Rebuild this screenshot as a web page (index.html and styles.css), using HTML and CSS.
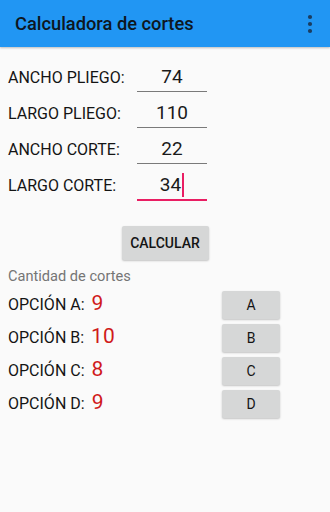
FILE: index.html
```html
<!DOCTYPE html>
<html lang="es">
<head>
<meta charset="utf-8">
<title>Calculadora de cortes</title>
<link rel="stylesheet" href="styles.css">
</head>
<body>
<header class="toolbar">
  <h1 class="title">Calculadora de cortes</h1>
  <svg class="menu" width="6" height="20" viewBox="0 0 6 20" aria-hidden="true">
    <circle cx="3" cy="3" r="2.1"/>
    <circle cx="3" cy="10" r="2.1"/>
    <circle cx="3" cy="17" r="2.1"/>
  </svg>
</header>
<main class="content">
  <div class="fields">
    <div class="field"><span class="label">ANCHO PLIEGO:</span><span class="input">74</span></div>
    <div class="field"><span class="label">LARGO PLIEGO:</span><span class="input">110</span></div>
    <div class="field"><span class="label">ANCHO CORTE:</span><span class="input">22</span></div>
    <div class="field"><span class="label">LARGO CORTE:</span><span class="input focused">34<span class="caret"></span></span></div>
  </div>
  <div class="calc-wrap"><button class="btn calc">CALCULAR</button></div>
  <p class="section">Cantidad de cortes</p>
  <div class="options">
    <div class="option"><div class="opt-left"><span class="opt-label">OPCIÓN A:</span><span class="opt-value">9</span></div><button class="btn opt-btn">A</button></div>
    <div class="option"><div class="opt-left"><span class="opt-label">OPCIÓN B:</span><span class="opt-value">10</span></div><button class="btn opt-btn">B</button></div>
    <div class="option"><div class="opt-left"><span class="opt-label">OPCIÓN C:</span><span class="opt-value">8</span></div><button class="btn opt-btn">C</button></div>
    <div class="option"><div class="opt-left"><span class="opt-label">OPCIÓN D:</span><span class="opt-value">9</span></div><button class="btn opt-btn">D</button></div>
  </div>
</main>
</body>
</html>
```
FILE: styles.css
```css
* { box-sizing: border-box; }
html, body { margin: 0; padding: 0; }
body {
  width: 330px;
  height: 512px;
  background: #fafafa;
  font-family: Roboto, "Noto Sans", "Liberation Sans", sans-serif;
  color: #141414;
  overflow: hidden;
}
.toolbar {
  height: 47px;
  background: #2196f3;
  display: flex;
  align-items: center;
  justify-content: space-between;
  padding: 0 17px 0 15px;
  box-shadow: 0 1px 2px rgba(0,0,0,0.25);
}
.title {
  margin: 0;
  font-size: 18.3px;
  font-weight: 500;
  color: #0e1620;
  letter-spacing: 0;
}
.menu { fill: #1b3d60; margin-top: 1px; }
.content { padding: 9px 0 0 8px; }
.fields { display: flex; flex-direction: column; }
.field {
  display: flex;
  height: 36px;
  padding-top: 8px;
  align-items: stretch;
}
.label {
  width: 129px;
  font-size: 16px;
  line-height: 28px;
  color: #141414;
}
.input {
  width: 70px;
  height: 28px;
  border-bottom: 1px solid #7a7a7a;
  text-align: center;
  font-size: 19px;
  line-height: 26px;
  color: #1a1a1a;
}
.input.focused { border-bottom: 2px solid #e91e63; height: 29px; }
.caret {
  display: inline-block;
  width: 2px;
  height: 24px;
  background: #e91e63;
  vertical-align: -6px;
  margin-left: 1px;
}
.calc-wrap { display: flex; justify-content: center; padding-right: 8px; margin-top: 26px; }
.btn {
  font-family: Roboto, "Noto Sans", "Liberation Sans", sans-serif;
  font-weight: 500;
  color: #141414;
  background: #d6d7d7;
  border: none;
  border-radius: 2px;
  box-shadow: 0 1px 2px rgba(0,0,0,0.22);
  padding: 0;
}
.calc {
  width: 87px;
  height: 34px;
  font-size: 14px;
}
.section {
  margin: 6px 0 2px;
  font-size: 14.6px;
  line-height: 20px;
  color: #757575;
}
.options { display: flex; flex-direction: column; }
.option {
  display: flex;
  align-items: center;
  height: 33px;
}
.opt-left {
  width: 214px;
  display: flex;
  align-items: center;
  gap: 7px;
}
.opt-label { font-size: 16px; color: #141414; }
.opt-value { font-size: 21px; color: #d01a1a; line-height: 24px; margin-top: -3px; }
.opt-btn {
  width: 58px;
  height: 28px;
  font-size: 14px;
  font-weight: 400;
}
```
